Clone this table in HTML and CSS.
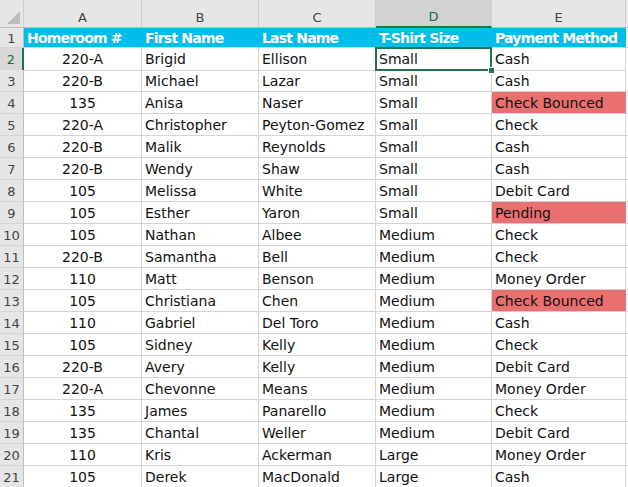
FILE: index.html
```html
<!DOCTYPE html>
<html>
<head>
<meta charset="utf-8">
<link rel="stylesheet" href="styles.css">
</head>
<body>
<div class="sheet">
  <div class="row colhead">
    <div class="corner"><span class="tri"></span></div>
    <div class="ch">A</div><div class="ch">B</div><div class="ch">C</div><div class="ch sel">D</div><div class="ch">E</div><div class="ch rest"></div>
  </div>
  <div class="row r1">
    <div class="rh">1</div>
    <div class="c hd">Homeroom #</div><div class="c hd">First Name</div><div class="c hd">Last Name</div><div class="c hd">T-Shirt Size</div><div class="c hd">Payment Method</div><div class="c rest"></div>
  </div>
  <div class="row">
    <div class="rh selrow">2</div>
    <div class="c ctr">220-A</div><div class="c">Brigid</div><div class="c">Ellison</div><div class="c active">Small<span class="handle"></span></div><div class="c">Cash</div><div class="c rest"></div>
  </div>
  <div class="row"><div class="rh">3</div><div class="c ctr">220-B</div><div class="c">Michael</div><div class="c">Lazar</div><div class="c">Small</div><div class="c">Cash</div><div class="c rest"></div></div>
  <div class="row"><div class="rh">4</div><div class="c ctr">135</div><div class="c">Anisa</div><div class="c">Naser</div><div class="c">Small</div><div class="c red">Check Bounced</div><div class="c rest"></div></div>
  <div class="row"><div class="rh">5</div><div class="c ctr">220-A</div><div class="c">Christopher</div><div class="c">Peyton-Gomez</div><div class="c">Small</div><div class="c">Check</div><div class="c rest"></div></div>
  <div class="row"><div class="rh">6</div><div class="c ctr">220-B</div><div class="c">Malik</div><div class="c">Reynolds</div><div class="c">Small</div><div class="c">Cash</div><div class="c rest"></div></div>
  <div class="row"><div class="rh">7</div><div class="c ctr">220-B</div><div class="c">Wendy</div><div class="c">Shaw</div><div class="c">Small</div><div class="c">Cash</div><div class="c rest"></div></div>
  <div class="row"><div class="rh">8</div><div class="c ctr">105</div><div class="c">Melissa</div><div class="c">White</div><div class="c">Small</div><div class="c">Debit Card</div><div class="c rest"></div></div>
  <div class="row"><div class="rh">9</div><div class="c ctr">105</div><div class="c">Esther</div><div class="c">Yaron</div><div class="c">Small</div><div class="c red">Pending</div><div class="c rest"></div></div>
  <div class="row"><div class="rh">10</div><div class="c ctr">105</div><div class="c">Nathan</div><div class="c">Albee</div><div class="c">Medium</div><div class="c">Check</div><div class="c rest"></div></div>
  <div class="row"><div class="rh">11</div><div class="c ctr">220-B</div><div class="c">Samantha</div><div class="c">Bell</div><div class="c">Medium</div><div class="c">Check</div><div class="c rest"></div></div>
  <div class="row"><div class="rh">12</div><div class="c ctr">110</div><div class="c">Matt</div><div class="c">Benson</div><div class="c">Medium</div><div class="c">Money Order</div><div class="c rest"></div></div>
  <div class="row"><div class="rh">13</div><div class="c ctr">105</div><div class="c">Christiana</div><div class="c">Chen</div><div class="c">Medium</div><div class="c red">Check Bounced</div><div class="c rest"></div></div>
  <div class="row"><div class="rh">14</div><div class="c ctr">110</div><div class="c">Gabriel</div><div class="c">Del Toro</div><div class="c">Medium</div><div class="c">Cash</div><div class="c rest"></div></div>
  <div class="row"><div class="rh">15</div><div class="c ctr">105</div><div class="c">Sidney</div><div class="c">Kelly</div><div class="c">Medium</div><div class="c">Check</div><div class="c rest"></div></div>
  <div class="row"><div class="rh">16</div><div class="c ctr">220-B</div><div class="c">Avery</div><div class="c">Kelly</div><div class="c">Medium</div><div class="c">Debit Card</div><div class="c rest"></div></div>
  <div class="row"><div class="rh">17</div><div class="c ctr">220-A</div><div class="c">Chevonne</div><div class="c">Means</div><div class="c">Medium</div><div class="c">Money Order</div><div class="c rest"></div></div>
  <div class="row"><div class="rh">18</div><div class="c ctr">135</div><div class="c">James</div><div class="c">Panarello</div><div class="c">Medium</div><div class="c">Check</div><div class="c rest"></div></div>
  <div class="row"><div class="rh">19</div><div class="c ctr">135</div><div class="c">Chantal</div><div class="c">Weller</div><div class="c">Medium</div><div class="c">Debit Card</div><div class="c rest"></div></div>
  <div class="row"><div class="rh">20</div><div class="c ctr">110</div><div class="c">Kris</div><div class="c">Ackerman</div><div class="c">Large</div><div class="c">Money Order</div><div class="c rest"></div></div>
  <div class="row"><div class="rh">21</div><div class="c ctr">105</div><div class="c">Derek</div><div class="c">MacDonald</div><div class="c">Large</div><div class="c">Cash</div><div class="c rest"></div></div>
</div>
</body>
</html>
```

FILE: styles.css
```css
html, body {
  margin: 0;
  padding: 0;
  background: #ffffff;
  overflow: hidden;
}
.sheet {
  width: 628px;
  font-family: "DejaVu Sans", sans-serif;
  color: #111;
}
.row {
  display: grid;
  grid-template-columns: 24px 118px 117px 117px 116px 134px 2px;
  height: 22px;
}
.row > div {
  box-sizing: border-box;
  border-right: 1px solid #d4d4d4;
  border-bottom: 1px solid #d4d4d4;
  white-space: nowrap;
  overflow: hidden;
}
.colhead { height: 28px; }
.colhead > div {
  background: #e6e6e6;
  border-bottom: 1px solid #bdbdbd;
  border-right: 1px solid #cfcfcf;
  font-size: 13px;
  color: #444;
  display: flex;
  align-items: center;
  justify-content: center;
  padding-top: 7px;
}
.colhead > .ch.sel {
  background: #d2d2d2;
  color: #1e6b40;
  border-bottom: 2px solid #217346;
  padding-top: 6px;
}
.colhead > .rest { border-right: none; }
.corner { position: relative; }
.tri {
  position: absolute;
  right: 3px;
  bottom: 3px;
  width: 0;
  height: 0;
  border-left: 13px solid transparent;
  border-bottom: 13px solid #bdbdbd;
}
.r1 { height: 20px; }
.rh {
  background: #e6e6e6;
  border-right-color: #bdbdbd !important;
  font-size: 13px;
  color: #444;
  display: flex;
  align-items: center;
  justify-content: center;
  padding-top: 1px;
}
.rh.selrow {
  background: #d8d8d8;
  color: #1e6b40;
  border-right: 2px solid #217346 !important;
}
.c {
  font-size: 14px;
  line-height: 22px;
  padding-left: 3px;
}
.c.ctr { text-align: center; padding-left: 0; }
.c.hd {
  background: #00bdea;
  color: #ffffff;
  font-weight: bold;
  line-height: 20px;
  letter-spacing: -0.8px;
}
.r1 > .c.hd { border-right-color: #00bdea; }
.c.rest { border-right: none; background: #fff; }
.c.red { background: #e9706f; border-right-color: #e9706f; }
.c.active {
  position: relative;
  overflow: visible !important;
  border-right-color: #217346;
  border-bottom-color: #217346;
}
.c.active::before {
  content: "";
  position: absolute;
  left: -1px;
  top: -1px;
  right: -1px;
  bottom: -1px;
  border: 2px solid #217346;
  pointer-events: none;
}
.handle {
  position: absolute;
  right: -4px;
  bottom: -4px;
  width: 5px;
  height: 5px;
  background: #217346;
  border: 1px solid #fff;
  z-index: 2;
}
```
